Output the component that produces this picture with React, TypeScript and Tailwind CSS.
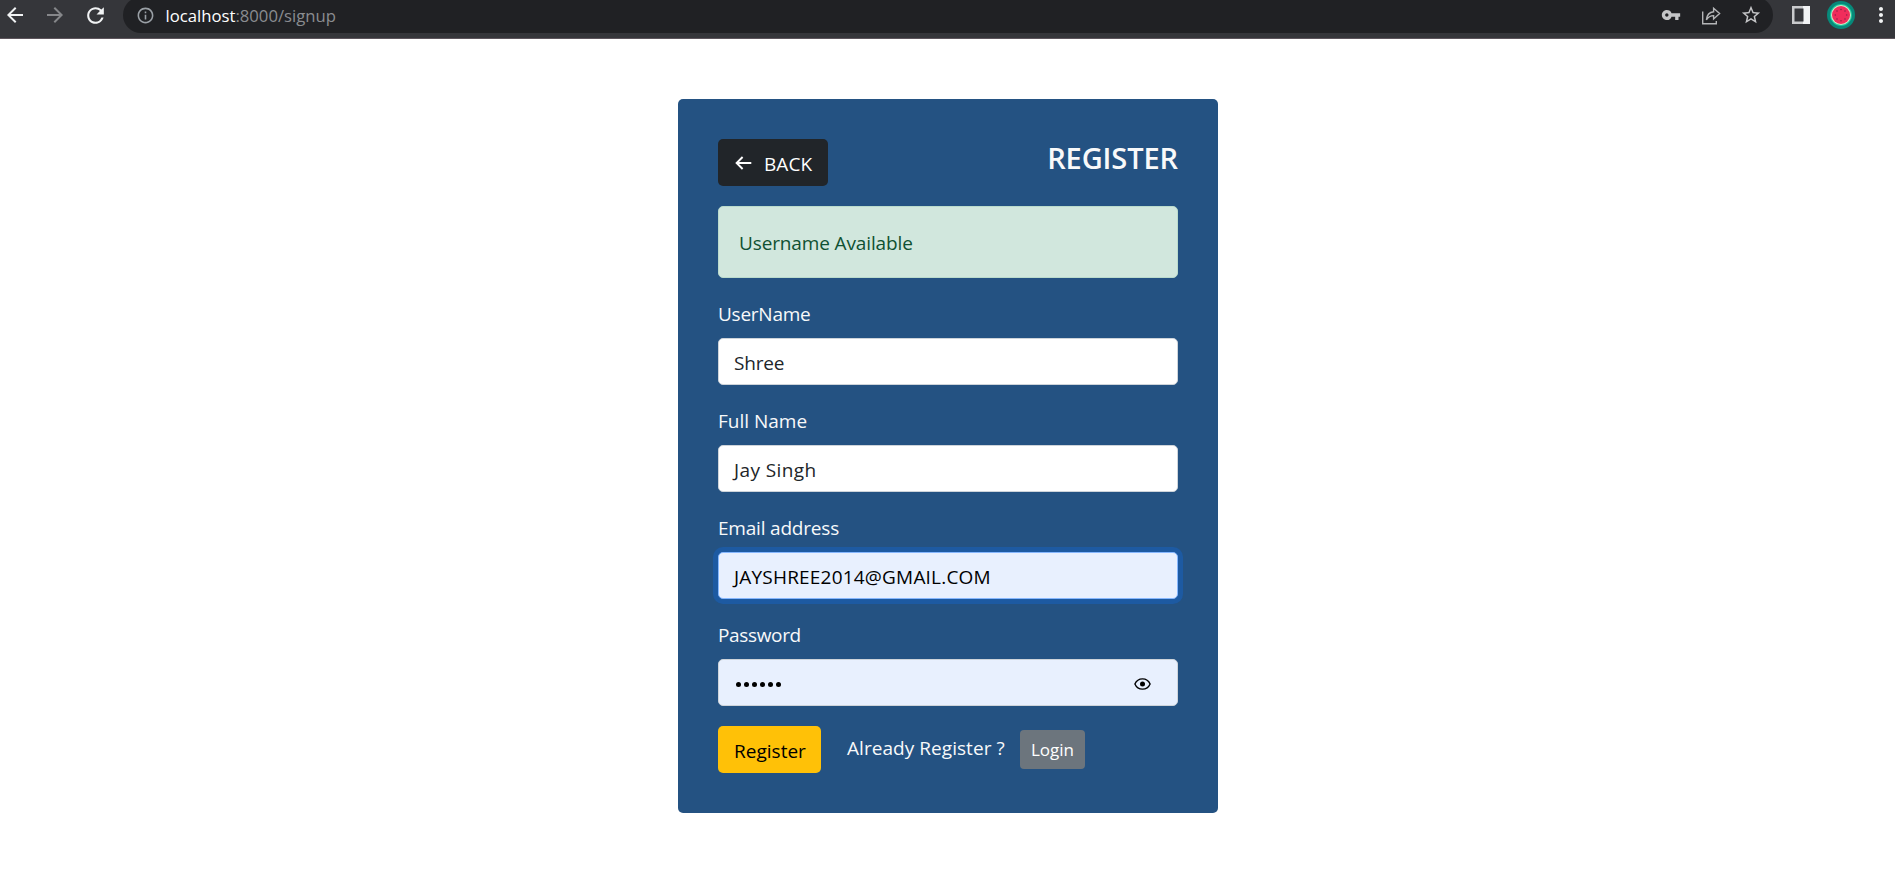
import React from "react";
import {
  MdArrowBack,
  MdArrowForward,
  MdRefresh,
  MdInfoOutline,
  MdVpnKey,
  MdStarBorder,
  MdMoreVert,
} from "react-icons/md";

function ShareIcon() {
  return (
    <svg width="20" height="20" viewBox="0 0 20 20" fill="none" stroke="#b4b5b7" strokeWidth="1.4">
      <path d="M1.7 6.6V18.7H15.3V16" />
      <path d="M5.4 14.8C5.8 10.4 8.6 7.3 12.6 6.8V3.2L18.6 8.6L12.6 13.9V10.6C9.4 10.6 7.1 12 5.4 14.8Z" />
    </svg>
  );
}

function SidePanelIcon() {
  return (
    <svg width="18" height="18" viewBox="0 0 18 18">
      <rect width="18" height="18" fill="#c9cacc" />
      <rect x="11" width="7" height="18" fill="#f1f3f4" />
      <rect x="2.5" y="2.5" width="9" height="13" fill="#35363a" />
    </svg>
  );
}

const seeds = [
  [14, 8.5],
  [18, 10],
  [19.7, 14],
  [18, 18],
  [14, 19.7],
  [10, 18],
  [8.3, 14],
  [10, 10],
];

function Avatar() {
  return (
    <svg width="28" height="28" viewBox="0 0 28 28">
      <circle cx="14" cy="14" r="14" fill="#07897a" />
      <circle cx="14" cy="14" r="11" fill="#1fc79b" />
      <circle cx="14" cy="14" r="10" fill="#d5e8c8" />
      <circle cx="14" cy="14" r="9" fill="#f02d5b" />
      {seeds.map(([x, y]) => (
        <circle key={`${x}-${y}`} cx={x} cy={y} r="0.8" fill="#8e2348" />
      ))}
    </svg>
  );
}

function BackArrow() {
  return (
    <svg width="17" height="14" viewBox="0 0 17 14" fill="none" stroke="#fff" strokeWidth="1.9">
      <path d="M16.3 7H1.6M7.6 1L1.6 7L7.6 13" />
    </svg>
  );
}

function EyeIcon() {
  return (
    <svg width="17" height="12" viewBox="0 0 17 12">
      <path
        d="M0.9 6C2.3 2.8 5 0.9 8.5 0.9S14.7 2.8 16.1 6C14.7 9.2 12 11.1 8.5 11.1S2.3 9.2 0.9 6Z"
        fill="none"
        stroke="#000"
        strokeWidth="1.4"
      />
      <circle cx="8.5" cy="6" r="2.5" fill="#000" />
    </svg>
  );
}

function Toolbar() {
  return (
    <header className="flex h-[39px] items-start overflow-hidden border-b border-[#5d555c] bg-[#35363a]">
      <div className="flex h-[30px] items-center gap-4 pl-[3px] text-[#f1f3f4]">
        <MdArrowBack size={24} />
        <MdArrowForward size={24} className="text-[#86878a]" />
        <MdRefresh size={25} />
      </div>
      <div className="-mt-[3px] ml-[15px] flex h-9 w-[1650px] items-center rounded-full bg-[#202124] pr-[11.5px] pl-[13px]">
        <MdInfoOutline size={19} className="text-[#9aa0a6]" />
        <div className="ml-[10.5px] flex pt-px text-[16.7px] leading-[30px] text-[#8a8c90]">
          <span className="text-white">localhost</span>
          <span>:8000/signup</span>
        </div>
        <div className="ml-auto flex items-center text-[#c4c5c7]">
          <MdVpnKey size={20} />
          <span className="ml-5">
            <ShareIcon />
          </span>
          <MdStarBorder size={22} className="ml-[19px]" />
        </div>
      </div>
      <div className="flex h-[30px] items-center pl-[18.5px] text-[#f1f3f4]">
        <SidePanelIcon />
        <span className="ml-[17.5px]">
          <Avatar />
        </span>
        <MdMoreVert size={24} className="ml-[13.5px]" />
      </div>
    </header>
  );
}

function Label({ children, className }: { children: React.ReactNode; className: string }) {
  return <label className={`block h-[30px] pt-px leading-[30px] text-[#f8f9fa] ${className}`}>{children}</label>;
}

const field =
  "mt-2.5 mb-5 flex h-[47px] items-center rounded-[5px] border px-[15px] pt-[2px] leading-[30px]";

export default function App() {
  return (
    <div className="min-h-[883px] bg-white font-['Open_Sans',sans-serif]">
      <Toolbar />
      <main className="pt-[60px] pl-px">
        <section className="mx-auto h-[714px] w-[540px] rounded-[5px] bg-[#245282] p-10 text-[19px]">
          <div className="flex h-[47px] items-start justify-between">
            <button className="flex h-[47px] w-[110px] items-center rounded-[5px] bg-[#212529] pl-[17px] text-white">
              <span className="flex">
                <BackArrow />
              </span>
              <span className="ml-3 pt-[3px] tracking-[0.1px]">BACK</span>
            </button>
            <h1 className="text-[29px] leading-[38px] font-semibold tracking-[-0.1px] text-[#f8f9fa]">REGISTER</h1>
          </div>

          <div className="mt-5 mb-5 flex h-[72px] items-center rounded-[5px] border border-[#badbcc] bg-[#d1e7dd] px-5 pt-[2px] tracking-[-0.13px] text-[#0f5132]">
            Username Available
          </div>

          <Label className="tracking-[-0.25px]">UserName</Label>
          <div className={`${field} border-[#ced4da] bg-white tracking-[-0.2px] text-[#212529]`}>Shree</div>

          <Label className="">Full Name</Label>
          <div className={`${field} border-[#ced4da] bg-white tracking-[0.4px] text-[#212529]`}>Jay Singh</div>

          <Label className="tracking-[-0.2px]">Email address</Label>
          <div
            className={`${field} border-[#86b7fe] bg-[#e8f0fe] tracking-[0.2px] text-black shadow-[0_0_0_5px_#1d5aa2]`}
          >
            JAYSHREE2014@GMAIL.COM
          </div>

          <Label className="tracking-[-0.35px]">Password</Label>
          <div className={`${field} justify-between border-[#ced4da] bg-[#e8f0fe] text-black`}>
            <span className="flex gap-[3.2px] pt-[2px] pl-[1.5px]">
              {[0, 1, 2, 3, 4, 5].map((i) => (
                <i key={i} className="size-[5px] rounded-full bg-black" />
              ))}
            </span>
            <span className="mr-[11px] flex">
              <EyeIcon />
            </span>
          </div>

          <div className="flex h-[47px] items-start">
            <button className="h-[47px] w-[103px] rounded-[5px] bg-[#ffc107] pt-[3px] pl-px text-black">
              Register
            </button>
            <span className="ml-[26px] w-[173px] pt-[7px] leading-[30px] tracking-[0.05px] text-[#f8f9fa]">
              Already Register ?
            </span>
            <button className="mt-1 h-[39px] w-[65px] rounded-[4px] bg-[#6c757d] pt-px text-[17px] text-white">
              Login
            </button>
          </div>
        </section>
      </main>
    </div>
  );
}
